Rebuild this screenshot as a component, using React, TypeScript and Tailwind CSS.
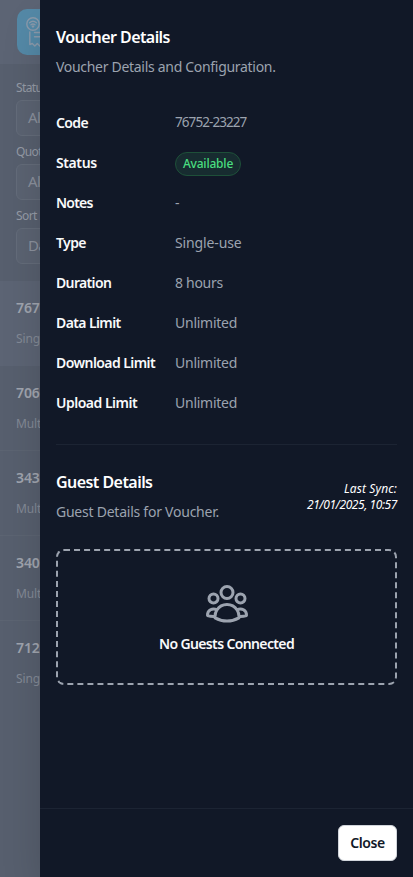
import type { ReactNode } from "react";

const filters = [
  { label: "Status", value: "All" },
  { label: "Quota", value: "All" },
  { label: "Sort By", value: "Date" },
];

const vouchers = [
  { code: "76752-23227", type: "Single-use" },
  { code: "70612-80143", type: "Multi-use" },
  { code: "34371-55920", type: "Multi-use" },
  { code: "34018-27364", type: "Multi-use" },
  { code: "71249-60518", type: "Single-use" },
];

function Logo() {
  return (
    <svg className="block h-[46px] w-[46px] shrink-0" viewBox="0 0 46 46" fill="none">
      <rect width="46" height="46" rx="10" fill="#5489a7" />
      <g stroke="#8b9aab" strokeWidth="1.4" strokeLinecap="round" strokeLinejoin="round">
        <circle cx="16" cy="15" r="6.2" />
        <path d="M12.6 13.8c2-1.8 4.8-1.8 6.8 0M14 15.8c1.2-1 2.8-1 4 0" />
        <path d="M15.3 17.3h1.4l-.7.8z" fill="#8b9aab" />
        <path d="M12.8 23V35.5l2.5-1 2.5 2.5 2.5-2.5 2.5 2.5 2.5-2.5V23M17.5 23.5h7M17.5 27.8h7" />
      </g>
    </svg>
  );
}

function VoucherPage() {
  return (
    <div className="h-full w-10 shrink-0 overflow-hidden bg-[#575f6e]">
      <div className="h-16 bg-[#5c6474] pl-[17px] pt-[9px]">
        <Logo />
      </div>
      <div className="h-[217px] pl-4 pt-[15px]">
        {filters.map((filter) => (
          <div key={filter.label} className="h-16 w-[380px]">
            <div className="h-[21px] text-[12px] leading-[18px] tracking-[-0.6px] text-[#959ba6]">{filter.label}</div>
            <div className="flex h-9 items-center rounded-md border border-[#646c7a] bg-[#5b6372] pb-px pl-[11px] text-[15px] tracking-[-0.7px] text-[#8b919d]">
              {filter.value}
            </div>
          </div>
        ))}
      </div>
      {vouchers.map((voucher, index) => (
        <div
          key={voucher.code}
          className={`h-[85px] w-[413px] border-b pl-4 pt-[15px] last:border-transparent ${index === 0 ? "border-[#5c6474] bg-[#5c6474]" : "border-[#5c6472]"}`}
        >
          <div className="text-[14px] font-semibold leading-6 tracking-[-0.1px] text-[#a0a5af]">{voucher.code}</div>
          <div className="mt-[9px] text-[12px] leading-5 tracking-[-0.1px] text-[#838a96]">{voucher.type}</div>
        </div>
      ))}
    </div>
  );
}

function Row({ label, labelClass, children }: { label: string; labelClass: string; children: ReactNode }) {
  return (
    <div className="flex h-10 items-center">
      <dt className={`w-[119px] shrink-0 pb-0.5 text-[14px] font-semibold text-[#f9fafb] ${labelClass}`}>{label}</dt>
      <dd className="flex text-[14px] text-[#9ca3af]">{children}</dd>
    </div>
  );
}

export default function App() {
  return (
    <div className="relative flex h-[877px] w-[413px] overflow-hidden whitespace-nowrap bg-[#575f6e] font-['Noto_Sans',sans-serif]">
      <VoucherPage />
      <aside className="flex min-w-0 grow flex-col bg-[#111827] text-white shadow-[0_20px_40px_-5px_rgba(0,0,0,0.2)]">
        <div className="grow px-4 pt-[25px]">
          <h2 className="text-[16px] font-semibold leading-6 tracking-[-0.57px]">Voucher Details</h2>
          <p className="mt-2 text-[14px] leading-5 tracking-[-0.3px] text-[#9ca3af]">Voucher Details and Configuration.</p>
          <dl className="mt-[26px] border-b border-[#1c2433] pb-[21px]">
            <Row label="Code" labelClass="tracking-[-0.6px]"><span className="pb-0.5 text-[13.5px] tracking-[-0.93px]">76752-23227</span></Row>
            <Row label="Status" labelClass="tracking-[-0.4px]">
              <span className="mt-px flex h-6 w-[66px] items-center justify-center rounded-full border border-[#1e5039] bg-[#172c30] text-[12px] font-medium tracking-[-0.2px] text-[#4ade80]">Available</span>
            </Row>
            <Row label="Notes" labelClass="tracking-[-0.8px]"><span className="pb-0.5">-</span></Row>
            <Row label="Type" labelClass="tracking-[-0.6px]"><span className="pb-0.5 tracking-[-0.12px]">Single-use</span></Row>
            <Row label="Duration" labelClass="tracking-[-0.65px]"><span className="pb-0.5 tracking-[-0.3px]">8 hours</span></Row>
            <Row label="Data Limit" labelClass="tracking-[-0.6px]"><span className="pb-0.5 tracking-[-0.25px]">Unlimited</span></Row>
            <Row label="Download Limit" labelClass="tracking-[-0.57px]"><span className="pb-0.5 tracking-[-0.25px]">Unlimited</span></Row>
            <Row label="Upload Limit" labelClass="tracking-[-0.5px]"><span className="pb-0.5 tracking-[-0.25px]">Unlimited</span></Row>
          </dl>
          <div className="mt-[25px] flex items-center justify-between">
            <div>
              <h2 className="text-[16px] font-semibold leading-6 tracking-[-0.55px]">Guest Details</h2>
              <p className="mt-2 text-[14px] leading-5 tracking-[-0.24px] text-[#9ca3af]">Guest Details for Voucher.</p>
            </div>
            <div className="pt-0.5 text-right text-[12px] italic leading-4">
              <div className="tracking-[0.1px]">Last Sync:</div>
              <div className="tracking-[-0.42px]">21/01/2025, 10:57</div>
            </div>
          </div>
          <div className="mt-[27px] flex h-[136px] flex-col items-center rounded-lg border-2 border-dashed border-[#9ca3af] pt-7">
            <svg className="h-12 w-12 text-[#9ca3af]" viewBox="0 0 24 24" fill="none" stroke="currentColor" strokeWidth="1.5" strokeLinecap="round" strokeLinejoin="round">
              <path d="M18 18.72a9.094 9.094 0 0 0 3.741-.479 3 3 0 0 0-4.682-2.72m.94 3.198.001.031c0 .225-.012.447-.037.666A11.944 11.944 0 0 1 12 21c-2.17 0-4.207-.576-5.963-1.584A6.062 6.062 0 0 1 6 18.719m12 0a5.971 5.971 0 0 0-.941-3.197m0 0A5.995 5.995 0 0 0 12 12.75a5.995 5.995 0 0 0-5.058 2.772m0 0a3 3 0 0 0-4.681 2.72 8.986 8.986 0 0 0 3.74.477m.94-3.197a5.971 5.971 0 0 0-.94 3.197M15 6.75a3 3 0 1 1-6 0 3 3 0 0 1 6 0Zm6 3a2.25 2.25 0 1 1-4.5 0 2.25 2.25 0 0 1 4.5 0Zm-13.5 0a2.25 2.25 0 1 1-4.5 0 2.25 2.25 0 0 1 4.5 0Z" />
            </svg>
            <span className="mt-[7px] text-[14px] font-semibold leading-5 tracking-[-0.63px] text-[#f9fafb]">No Guests Connected</span>
          </div>
        </div>
        <footer className="flex h-[69px] items-start justify-end border-t border-[#1c2433] px-4 pt-4">
          <button className="h-9 w-[59px] rounded-md border border-[#d1d5db] bg-white pb-0.5 text-[14px] font-semibold tracking-[-0.4px] text-[#111827]">Close</button>
        </footer>
      </aside>
    </div>
  );
}
